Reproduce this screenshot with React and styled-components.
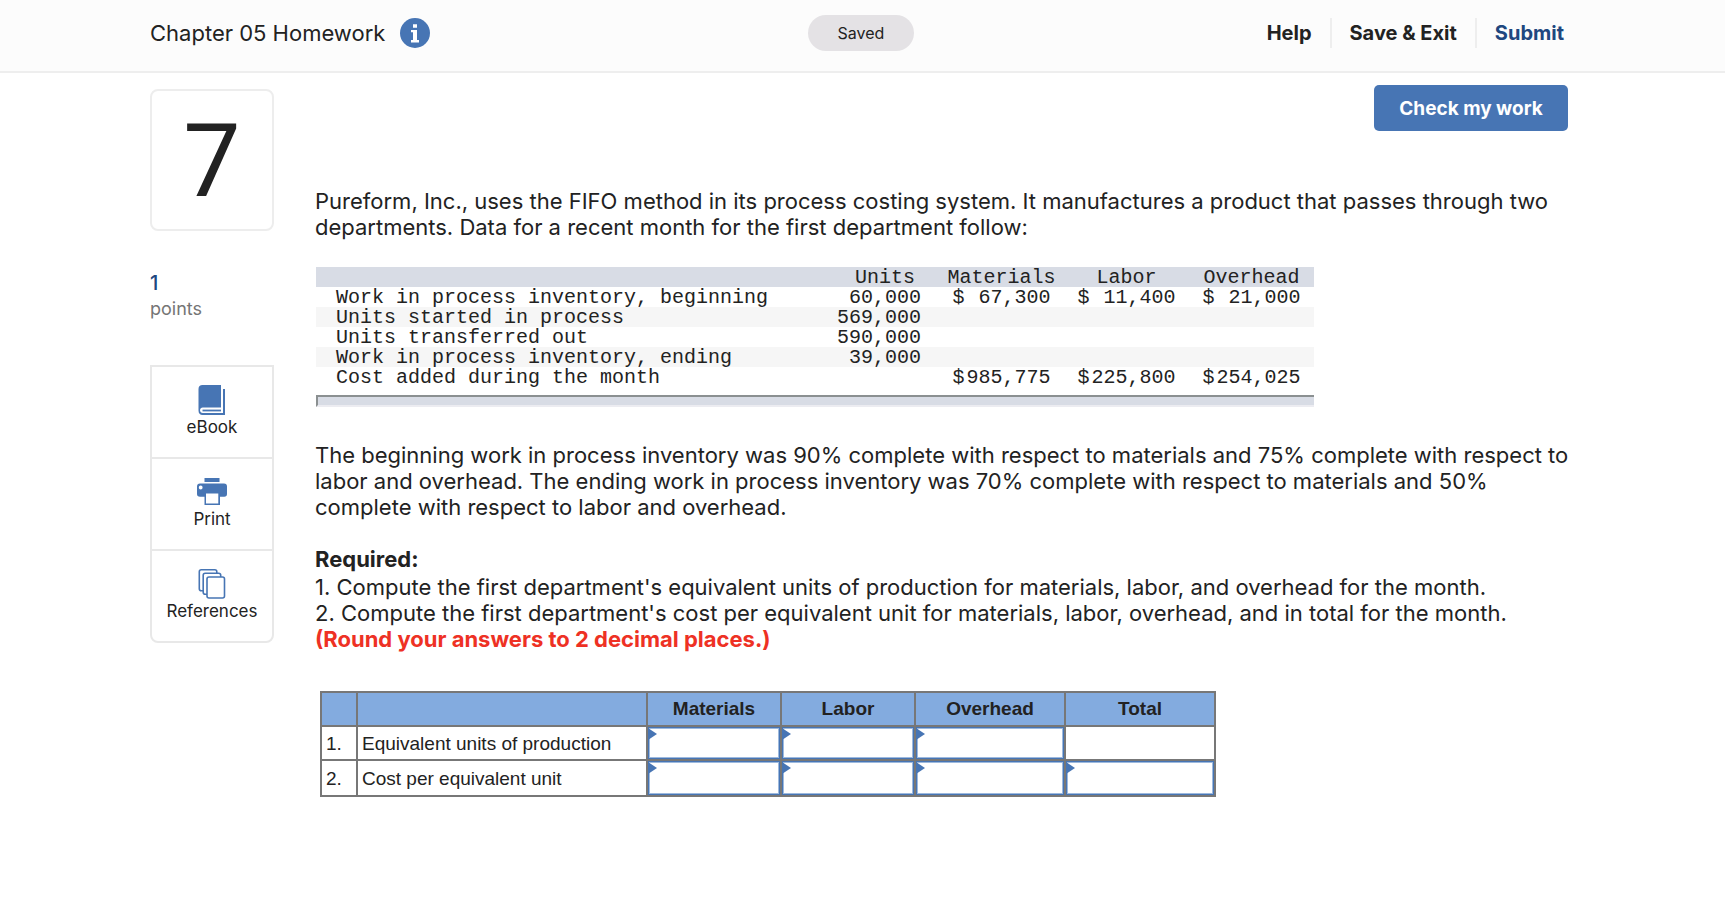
import React from "react";
import styled, { createGlobalStyle } from "styled-components";

const Global = createGlobalStyle`
  *, *::before, *::after { box-sizing: border-box; }
  body { margin: 0; background: #fff; color: #222; font-family: Inter, "Open Sans", sans-serif; font-size: 22px; line-height: 26px; }
  button, input { font: inherit; color: inherit; }
  p, h1, h2 { margin: 0; font-size: inherit; }
`;

const Header = styled.header`
  display: grid;
  grid-template-columns: 1fr auto 1fr;
  align-items: center;
  height: 73px;
  padding: 0 161px 6px 150px;
  background: #fcfcfc;
  border-bottom: 2px solid #eee;
`;
const Title = styled.h1`
  display: flex;
  align-items: center;
  gap: 15px;
  font-size: 22px;
  font-weight: 400;
  white-space: nowrap;
`;
const IconButton = styled.button`
  display: flex;
  padding: 0;
  border: 0;
  background: none;
`;
const Saved = styled.span`
  width: 106px;
  padding: 5px 0;
  margin-left: 8px;
  text-align: center;
  border-radius: 18px;
  background: #e4e2e5;
  font-size: 16px;
`;
const Nav = styled.nav`
  display: flex;
  justify-content: flex-end;
  align-items: center;
  white-space: nowrap;
`;
const NavLink = styled.a`
  padding: 2px 0;
  color: ${(p) => (p.$primary ? "#20477f" : "#222")};
  font-size: 20px;
  font-weight: 700;
  text-decoration: none;
  & + & {
    margin-left: 18px;
    padding-left: 18px;
    border-left: 2px solid #eee;
  }
`;

const Main = styled.main`
  display: grid;
  grid-template-columns: 124px minmax(0, 1fr);
  column-gap: 41px;
  padding: 12px 150px 40px;
`;
const Side = styled.aside`
  padding-top: 4px;
`;
const QuestionNumber = styled.div`
  height: 142px;
  padding-top: 10px;
  border: 2px solid #ededed;
  border-radius: 8px;
  font-family: Roboto, sans-serif;
  font-size: 102px;
  line-height: 120px;
  text-align: center;
`;
const Points = styled.div`
  margin: 40px 0 44px;
  color: #757575;
  font-size: 18px;
  line-height: 25px;
`;
const Score = styled.div`
  color: #20477f;
  font-size: 20px;
  font-weight: 500;
`;
const Tools = styled.div`
  display: flex;
  flex-direction: column;
  border: 2px solid #e8e8e8;
  border-radius: 0 0 8px 8px;
`;
const Tool = styled.button`
  display: flex;
  flex-direction: column;
  align-items: center;
  height: ${(p) => (p.$last ? 90 : 92)}px;
  padding: 18px 0 0;
  border: 0;
  border-bottom: ${(p) => (p.$last ? "0" : "2px solid #e8e8e8")};
  background: none;
  font-size: 17px;
  line-height: 24px;
`;

const Content = styled.section`
  display: flex;
  flex-direction: column;
  align-items: flex-start;
`;
const CheckButton = styled.button`
  align-self: flex-end;
  margin: 0 7px 57px 0;
  width: 194px;
  height: 46px;
  padding: 2px 0 0;
  border: 0;
  border-radius: 5px;
  background: #4775b4;
  color: #fff;
  font-size: 19px;
  font-weight: 700;
`;
const Required = styled.h2`
  margin: 26px 0 2px;
  font-weight: 700;
`;
const Rounding = styled.strong`
  color: #ee3124;
`;

const DataTable = styled.table`
  width: 998px;
  max-width: 100%;
  margin: 27px 0 35px 1px;
  table-layout: fixed;
  border-collapse: collapse;
  font: 20px/18px "Liberation Mono", monospace;
  th { font-weight: 400; }
  th, td { height: 20px; padding: 2px 0 0; }
  thead tr { background: #d8dce5; }
  tbody tr:nth-child(even) { background: #f6f6f6; }
  tbody th { padding-left: 20px; text-align: left; white-space: nowrap; }
  tfoot td { height: 20px; padding-top: 8px; }
`;
const UnitsCell = styled.td`
  && { padding-right: 18px; }
  text-align: right;
`;
const Money = styled.span`
  display: flex;
  justify-content: space-between;
  width: 98px;
  margin: 0 auto;
`;
const Rule = styled.div`
  height: 12px;
  background: #d8dce5;
  border-top: 2px solid #8b9091;
  border-left: 2px solid #8b9091;
  border-bottom: 2px solid #ececf1;
`;

const AnswerTable = styled.table`
  width: 896px;
  max-width: 100%;
  margin: 39px 0 0 5px;
  table-layout: fixed;
  border-collapse: collapse;
  font: 19px/22px "Liberation Sans", Arial, sans-serif;
  th, td { height: 34px; padding: 2px 0 0 4px; border: 2px solid #777; text-align: left; font-weight: 400; }
  thead th { padding: 0; background: #83abdf; text-align: center; font-weight: 700; }
  tbody tr:last-child > * { height: 36px; }
`;
const InputCell = styled.td`
  && { padding: 0; }
  position: relative;
  &::before {
    content: "";
    position: absolute;
    left: 0;
    top: 1px;
    border-left: 9px solid #4775b4;
    border-top: 6px solid transparent;
    border-bottom: 6px solid transparent;
  }
`;
const Answer = styled.input`
  display: block;
  width: 100%;
  height: ${(p) => (p.$tall ? 34 : 32)}px;
  padding: 0 8px 0 12px;
  border: 1px solid #4775b4;
  box-shadow: inset 0 0 0 1px #9db9dd;
  background: #fff;
  text-align: right;
  outline: 0;
`;

const InfoIcon = () => (
  <svg width="30" height="30" viewBox="0 0 30 30" aria-hidden="true">
    <circle cx="15" cy="15" r="15" fill="#4775b4" />
    <path fill="#fff" d="M13 6.300h4v3.400h-4zM11 12h6v10h2v2.400h-8V22h2v-7.700h-2z" />
  </svg>
);
const BookIcon = () => (
  <svg width="28" height="30" viewBox="0 0 28 30" aria-hidden="true">
    <path fill="#4775b4" d="M4.500 0H23v22.500H4.800C3.200 22.500 2 23.700 2 25.200s1.200 2.800 2.800 2.800H25V4h2v26H4.500C2 30 .5 28.300.5 25.500V4C.5 1.500 2 0 4.500 0z" />
    <path fill="#4775b4" d="M4.500 24.600H23v1.800H4.500z" />
  </svg>
);
const PrintIcon = () => (
  <svg width="30" height="30" viewBox="0 0 30 30" aria-hidden="true">
    <path fill="#4775b4" fillRule="evenodd" d="M7.500 1h15v4h-15zM3 6.500h24c2 0 3 1 3 3V17c0 1.800-1 2.700-2.700 2.700H23V28H7.500v-8.300H3C1 19.700 0 18.800 0 17V9.500c0-2 1-3 3-3zM9 16.500v10h12.300v-10zM3.700 8.600a1.900 1.900 0 1 0 0 3.800 1.900 1.900 0 0 0 0-3.800z" />
  </svg>
);
const PagesIcon = () => (
  <svg width="28" height="30" viewBox="0 0 28 30" fill="#fff" stroke="#4775b4" strokeWidth="1.600" aria-hidden="true">
    <rect x="1.300" y=".8" width="17.500" height="21" rx="2" />
    <rect x="5.200" y="4.300" width="17.500" height="21" rx="2" />
    <rect x="9" y="8" width="17.500" height="21" rx="2" />
  </svg>
);

const tools = [
  ["eBook", BookIcon],
  ["Print", PrintIcon],
  ["References", PagesIcon],
];

const dataRows = [
  ["Work in process inventory, beginning", "60,000", ["67,300", "11,400", "21,000"]],
  ["Units started in process", "569,000", []],
  ["Units transferred out", "590,000", []],
  ["Work in process inventory, ending", "39,000", []],
  ["Cost added during the month", "", ["985,775", "225,800", "254,025"]],
];

const answerRows = [
  ["1.", "Equivalent units of production", ["Materials", "Labor", "Overhead"]],
  ["2.", "Cost per equivalent unit", ["Materials", "Labor", "Overhead", "Total"]],
];
const answerColumns = ["Materials", "Labor", "Overhead", "Total"];

export default function App() {
  return (
    <>
      <Global />
      <Header>
        <Title>
          Chapter 05 Homework
          <IconButton aria-label="Assignment information"><InfoIcon /></IconButton>
        </Title>
        <Saved>Saved</Saved>
        <Nav>
          <NavLink href="#help">Help</NavLink>
          <NavLink href="#exit">Save &amp; Exit</NavLink>
          <NavLink href="#submit" $primary>Submit</NavLink>
        </Nav>
      </Header>
      <Main>
        <Side>
          <QuestionNumber>7</QuestionNumber>
          <Points>
            <Score>1</Score>
            points
          </Points>
          <Tools>
            {tools.map(([label, Icon], i) => (
              <Tool key={label} $last={i === tools.length - 1}>
                <Icon />
                {label}
              </Tool>
            ))}
          </Tools>
        </Side>
        <Content>
          <CheckButton>Check my work</CheckButton>
          <p>
            Pureform, Inc., uses the FIFO method in its process costing system. It manufactures a product that passes through two<br />
            departments. Data for a recent month for the first department follow:
          </p>
          <DataTable>
            <colgroup>
              <col />
              <col style={{ width: 108 }} />
              <col style={{ width: 125 }} />
              <col style={{ width: 125 }} />
              <col style={{ width: 125 }} />
            </colgroup>
            <thead>
              <tr>
                <td />
                <th scope="col">Units</th>
                <th scope="col">Materials</th>
                <th scope="col">Labor</th>
                <th scope="col">Overhead</th>
              </tr>
            </thead>
            <tbody>
              {dataRows.map(([label, units, costs]) => (
                <tr key={label}>
                  <th scope="row">{label}</th>
                  <UnitsCell>{units}</UnitsCell>
                  {[0, 1, 2].map((i) => (
                    <td key={i}>
                      {costs[i] && <Money><span>$</span><span>{costs[i]}</span></Money>}
                    </td>
                  ))}
                </tr>
              ))}
            </tbody>
            <tfoot>
              <tr><td colSpan={5}><Rule /></td></tr>
            </tfoot>
          </DataTable>
          <p>
            The beginning work in process inventory was 90% complete with respect to materials and 75% complete with respect to<br />
            labor and overhead. The ending work in process inventory was 70% complete with respect to materials and 50%<br />
            complete with respect to labor and overhead.
          </p>
          <Required>Required:</Required>
          <p>1. Compute the first department's equivalent units of production for materials, labor, and overhead for the month.</p>
          <p>
            2. Compute the first department's cost per equivalent unit for materials, labor, overhead, and in total for the month.<br />
            <Rounding>(Round your answers to 2 decimal places.)</Rounding>
          </p>
          <AnswerTable>
            <colgroup>
              <col style={{ width: 36 }} />
              <col style={{ width: 290 }} />
              <col style={{ width: 134 }} />
              <col style={{ width: 134 }} />
              <col style={{ width: 150 }} />
              <col />
            </colgroup>
            <thead>
              <tr>
                <th /><th />
                {answerColumns.map((c) => <th scope="col" key={c}>{c}</th>)}
              </tr>
            </thead>
            <tbody>
              {answerRows.map(([n, label, fields], row) => (
                <tr key={n}>
                  <td>{n}</td>
                  <th scope="row">{label}</th>
                  {answerColumns.map((c) =>
                    fields.includes(c) ? (
                      <InputCell key={c}><Answer $tall={row === 1} aria-label={`${label}, ${c}`} /></InputCell>
                    ) : (
                      <td key={c} />
                    )
                  )}
                </tr>
              ))}
            </tbody>
          </AnswerTable>
        </Content>
      </Main>
    </>
  );
}
